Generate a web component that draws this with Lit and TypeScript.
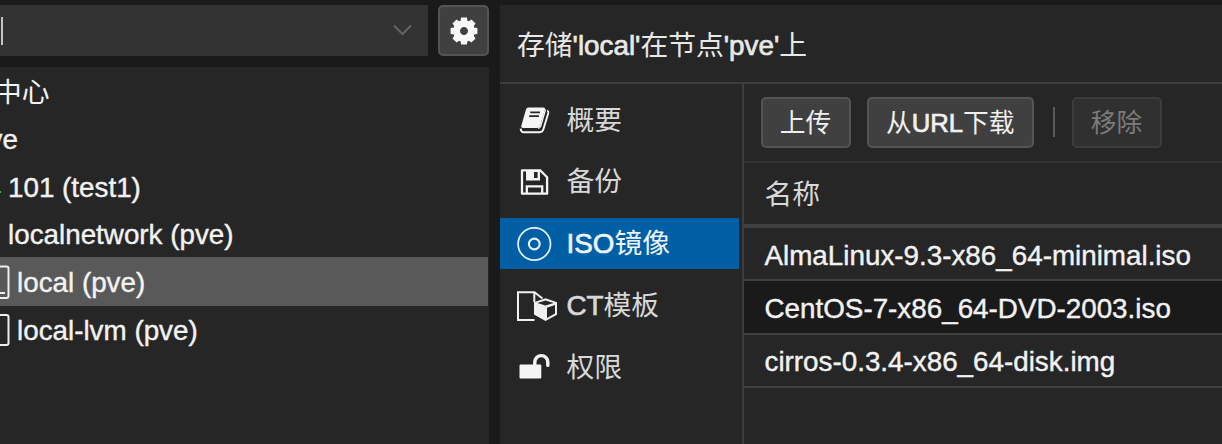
import { LitElement, html, svg, css } from "lit";
import { customElement } from "lit/decorators.js";

const gear = Array.from({ length: 8 }, (_, i) => i * 45);

const icons: Record<string, unknown> = {
  book: svg`<path d="M12.500 5.500h14.800c1.300 0 2 .9 1.700 2L24.200 24c-.4 1.300-1.200 1.900-2.500 1.900H7c-1.400 0-2.100-.9-1.700-2.200L10 7.500c.4-1.300 1.200-2 2.500-2z" fill="#f5f5f5"/><path d="M31.200 8.500c1 .5 1.400 1.300 1.100 2.400l-4.900 16.400c-.6 2-1.800 2.900-3.700 2.900H8c-1.900 0-3.200-1.200-3.400-3.600" stroke="#f5f5f5" stroke-width="1.900" fill="none"/><path d="M29.500 7.500l-4.700 16.600c-.5 1.500-1.300 2.300-2.800 2.300" stroke="#f5f5f5" stroke-width="1.300" fill="none"/><path d="M14.300 10.300h9.700M13.200 14.200h9.700" stroke="#262626" stroke-width="1.800" fill="none"/>`,
  floppy: svg`<path d="M6 6.300h18.200l6.900 6.900v16.500H6z" fill="none" stroke="#f5f5f5" stroke-width="2.300" stroke-linejoin="round"/><path d="M10 6h14v10.500H10z" fill="#f5f5f5"/><path d="M18 8h3.600v6h-3.600z" fill="#262626"/><path d="M10.800 29.500v-7.200h15.400v7.200" fill="none" stroke="#f5f5f5" stroke-width="2.300"/>`,
  disc: svg`<circle cx="18.300" cy="18" r="16.200" fill="none" stroke="#e7f1f8" stroke-width="1.700"/><circle cx="18.300" cy="18" r="5.400" fill="none" stroke="#e7f1f8" stroke-width="2.100"/>`,
  template: svg`<path d="M18.500 32H2V4.200h16.500l8 6.300M18.300 4.500v9.500" fill="none" stroke="#f0f0f0" stroke-width="2"/><path d="M29.500 10.200L41 14.200v12.500L29.500 33L18 26.500V14.200z" fill="#f0f0f0"/><path d="M21.300 14.900l8.200-2.500 8.200 2.500-8.200 2.700zM31 19.800l8-2.900v8.600l-8 4.500z" fill="#262626"/>`,
  unlock: svg`<path d="M4.800 15.600h19.200c.8 0 1.300 .5 1.300 1.300v11.300c0 .8-.5 1.300-1.300 1.300H4.800c-.8 0-1.300-.5-1.300-1.300V16.900c0-.8.5-1.300 1.300-1.300z" fill="#f5f5f5"/><path d="M18.800 16.500v-3.400a6.500 6.500 0 0 1 13 0v3.300" fill="none" stroke="#f5f5f5" stroke-width="3.400" stroke-linecap="round"/>`,
};

@customElement("app-root")
export class AppRoot extends LitElement {
  static styles = css`
    :host {
      display: grid;
      grid-template-columns: 489px 722px;
      column-gap: 11px;
      box-sizing: border-box;
      height: 444px;
      padding-top: 5px;
      overflow: hidden;
      background: #1a1a1a;
      color: #f2f2f2;
      font: 27.8px/40px "Liberation Sans", "Noto Sans CJK SC", sans-serif;
      white-space: nowrap;
    }
    * { box-sizing: border-box; }
    svg { display: block; flex: none; }
    .en { -webkit-text-stroke: 0.4px currentColor; }
    .left { display: flex; flex-direction: column; gap: 11px; min-width: 0; }
    .search { display: flex; justify-content: space-between; height: 51px; }
    .combo {
      display: flex; align-items: center; justify-content: space-between;
      width: 427.500px; background: #333; padding-right: 15px;
    }
    .cut { width: 2.500px; height: 28px; border-right: 2px solid #c4c4c4; }
    .btn {
      display: flex; align-items: center; justify-content: center;
      height: 51px; border: 2px solid #545454; border-radius: 5px;
      background: #404040; color: #f0f0f0; font-size: 25.700px;
    }
    .btn span { margin: 0; }
    .gear { width: 51px; }
    .tree { flex: 1; background: #262626; padding-top: 1px; }
    .node { display: flex; align-items: center; height: 47.300px; width: 488px; overflow: hidden; }
    .node > span:last-child { padding-top: 3px; }
    .node.sel { background: #595959; height: 49px; }
    .datacenter { margin-left: -6px; }
    .pve { margin-left: -11.500px; }
    .vm { margin-left: 7px; }
    .status { width: 1px; height: 2px; background: #21bf4b; margin-top: 12px; }
    .net { margin-left: 8px; }
    .store { margin-left: 7px; }
    .right { display: flex; flex-direction: column; background: #262626; min-width: 0; }
    .title { height: 78.500px; padding: 20.500px 0 0 17px; border-bottom: 2px solid #3d3d3d; color: #e8e8e8; }
    .title .en { -webkit-text-stroke-width: 0.7px; }
    .body { flex: 1; display: flex; min-height: 0; }
    .tabs { width: 243.500px; border-right: 2px solid #3d3d3d; padding-top: 11px; display: flex; flex-direction: column; gap: 10.500px; }
    .tab { width: 239px; height: 51.300px; display: flex; align-items: center; padding-left: 16px; gap: 8.500px; color: #d8d8d8; }
    .tab > span { padding-top: 1px; }
    .tab .en, .btn .en { -webkit-text-stroke-width: 0.7px; }
    .tab.sel { background: #005fa5; color: #edf4f9; }
    .main { flex: 1; min-width: 0; }
    .toolbar { display: flex; height: 79px; padding: 13.500px 0 0 17px; border-bottom: 2px solid #333; }
    .upload { width: 90px; }
    .url { width: 166.500px; margin-left: 16.500px; }
    .sep { width: 2px; height: 30px; margin: 10px 17px 0 19px; background: #595959; }
    .off { width: 90px; background: #303030; border-color: #3d3d3d; color: #7b7b7b; }
    .head { height: 65.500px; padding: 12.500px 0 0 21px; border-bottom: 4px solid #404040; color: #d8d8d8; }
    .file { height: 53.400px; padding: 7.500px 0 0 21px; border-bottom: 2px solid #404040; }
    .alt { background: #1a1a1a; }
  `;

  private tab(icon: string, label: unknown, selected = false) {
    return html`<div class="tab ${selected ? "sel" : ""}">
      <svg width="42" height="36" viewBox="0 0 42 36">${icons[icon]}</svg><span>${label}</span>
    </div>`;
  }

  render() {
    return html`
      <section class="left">
        <div class="search">
          <div class="combo">
            <span class="cut"></span>
            <svg width="22" height="16" viewBox="0 0 22 16"><path d="M3 2.500l8.500 8.500L20 2.500" fill="none" stroke="#646464" stroke-width="2"/></svg>
          </div>
          <div class="btn gear">
            <svg width="30" height="30" viewBox="-15 -15 30 30">
              ${gear.map((a) => svg`<path d="M-3.600-9L-2.900-13.400H2.900L3.600-9z" fill="#f7f7f7" transform="rotate(${a})"/>`)}
              <circle r="7.400" fill="none" stroke="#f7f7f7" stroke-width="6.800"/>
            </svg>
          </div>
        </div>
        <div class="tree">
          <div class="node"><span class="datacenter">中心</span></div>
          <div class="node"><span class="pve en">ve</span></div>
          <div class="node"><span class="status"></span><span class="vm en">101 (test1)</span></div>
          <div class="node"><span class="net en">localnetwork (pve)</span></div>
          <div class="node sel">
            <svg width="10" height="36" viewBox="0 0 10 36"><path d="M-2 2.500H6.500a2 2 0 0 1 2 2V32a2 2 0 0 1-2 2H-2M-2 29h7" fill="none" stroke="#eee" stroke-width="2"/></svg>
            <span class="store en">local (pve)</span>
          </div>
          <div class="node">
            <svg width="10" height="36" viewBox="0 0 10 36"><path d="M-2 3H6.500a2 2 0 0 1 2 2V31a2 2 0 0 1-2 2H-2" fill="none" stroke="#eee" stroke-width="2"/></svg>
            <span class="store en">local-lvm (pve)</span>
          </div>
        </div>
      </section>
      <section class="right">
        <div class="title">存储<span class="en">'local'</span>在节点<span class="en">'pve'</span>上</div>
        <div class="body">
          <nav class="tabs">
            ${this.tab("book", "概要")}
            ${this.tab("floppy", "备份")}
            ${this.tab("disc", html`<span class="en">ISO</span>镜像`, true)}
            ${this.tab("template", html`<span class="en">CT</span>模板`)}
            ${this.tab("unlock", "权限")}
          </nav>
          <div class="main">
            <div class="toolbar">
              <div class="btn upload">上传</div>
              <div class="btn url">从<span class="en">URL</span>下载</div>
              <span class="sep"></span>
              <div class="btn off">移除</div>
            </div>
            <div class="head">名称</div>
            <div class="file en">AlmaLinux-9.3-x86_64-minimal.iso</div>
            <div class="file alt en">CentOS-7-x86_64-DVD-2003.iso</div>
            <div class="file en">cirros-0.3.4-x86_64-disk.img</div>
          </div>
        </div>
      </section>
    `;
  }
}
